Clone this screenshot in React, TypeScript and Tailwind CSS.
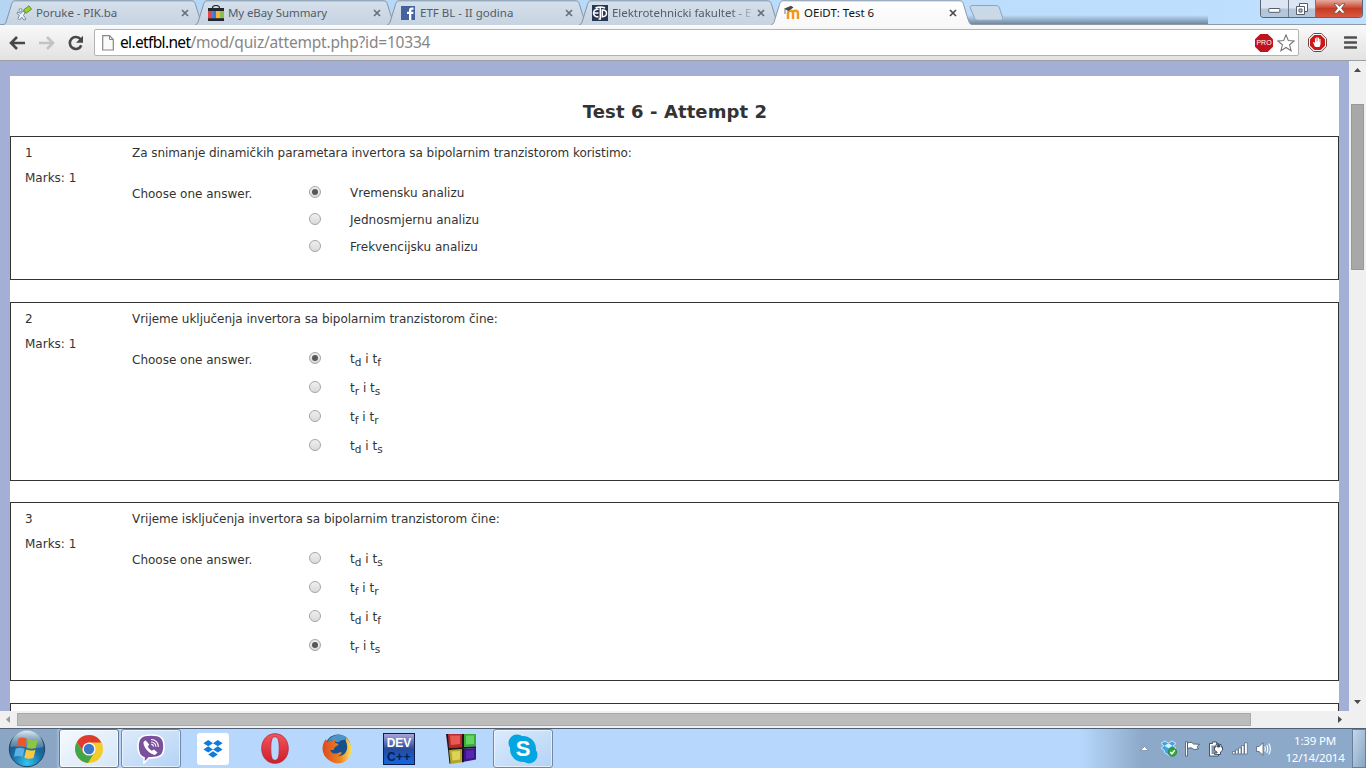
import React from "react";

type Choice = { parts: [string, string?][]; checked?: boolean };
type QuestionData = { no: string; text: string; choices: Choice[]; box: string; tall: boolean };

const t = (a: string, b: string, checked = false): Choice => ({
  parts: [["t", a], [" i t", b]],
  checked,
});

const questions: QuestionData[] = [
  {
    no: "1",
    text: "Za snimanje dinamičkih parametara invertora sa bipolarnim tranzistorom koristimo:",
    box: "h-[144px] mb-[22px]",
    tall: false,
    choices: [
      { parts: [["Vremensku analizu"]], checked: true },
      { parts: [["Jednosmjernu analizu"]] },
      { parts: [["Frekvencijsku analizu"]] },
    ],
  },
  {
    no: "2",
    text: "Vrijeme uključenja invertora sa bipolarnim tranzistorom čine:",
    box: "h-[179px] mb-[21px]",
    tall: true,
    choices: [t("d", "f", true), t("r", "s"), t("f", "r"), t("d", "s")],
  },
  {
    no: "3",
    text: "Vrijeme isključenja invertora sa bipolarnim tranzistorom čine:",
    box: "h-[179px] mb-[22px]",
    tall: true,
    choices: [t("d", "s"), t("f", "r"), t("d", "f"), t("r", "s", true)],
  },
];

function Radio({ checked }: { checked?: boolean }) {
  return (
    <svg className="mb-px shrink-0" width="12" height="12" viewBox="0 0 12 12">
      <defs>
        <linearGradient id="radio" x1="0" y1="0" x2="0" y2="1">
          <stop offset="0" stopColor="#f0f0f0" />
          <stop offset="1" stopColor="#d9d9d9" />
        </linearGradient>
      </defs>
      <circle cx="6" cy="6" r="5.500" fill="url(#radio)" stroke="#a6a6a6" />
      {checked && <circle cx="6" cy="6" r="3" fill="#575757" />}
    </svg>
  );
}

function Question({ q }: { q: QuestionData }) {
  return (
    <section className={`flex shrink-0 border border-[#333] pl-[14px] pt-[8px] ${q.box}`}>
      <div className="w-[107px] shrink-0 leading-4">
        <div>{q.no}</div>
        <div className="mt-[9px] tracking-normal">Marks: 1</div>
      </div>
      <div>
        <div className={`leading-4 ${q.tall ? "tracking-[-0.03px]" : ""}`}>{q.text}</div>
        <div className="mt-[17px] flex">
          <div className="mt-[8px] w-[177px] leading-4 tracking-normal">Choose one answer.</div>
          <div>
            {q.choices.map((c, i) => (
              <div key={i} className={`flex items-center ${q.tall ? "h-[29px]" : "h-[27px]"} ${i === 0 && !q.tall ? "mt-px" : ""}`}>
                <Radio checked={c.checked} />
                <div className="ml-[29px] whitespace-pre leading-4 tracking-[0.02px]">
                  {c.parts.map(([s, sub], j) => (
                    <React.Fragment key={j}>
                      {s}
                      {sub && <span className="relative top-[3px] text-[10.5px]">{sub}</span>}
                    </React.Fragment>
                  ))}
                </div>
              </div>
            ))}
          </div>
        </div>
      </div>
    </section>
  );
}

const PikIcon = () => (
  <svg width="16" height="16" viewBox="0 0 16 16">
    <path d="M1.500 7 5 8.500 7 6l2 1.500-1.500 3L10 14l-2 1-2.200-2.800L3.500 15 2 13.500l1.500-3.200L1 8.500z" fill="#eef4fa" stroke="#6d8093" strokeWidth=".9" />
    <path d="M7.500 5 13 .8l2.600 3.400L10 8.300z" fill="#9bcf2e" stroke="#5f8a2b" strokeWidth=".9" />
    <circle cx="4.500" cy="5" r="1.500" fill="#e8f0f7" stroke="#6d8093" strokeWidth=".8" />
  </svg>
);
const EbayIcon = () => (
  <svg width="16" height="16" viewBox="0 0 16 16">
    <path d="M4.500 4.500V3.200a3.500 2.700 0 0 1 7 0v1.300" fill="none" stroke="#24262e" strokeWidth="1.200" />
    <rect y="3" width="16" height="3" fill="#24262e" />
    <rect y="6" width="4.200" height="7.500" fill="#e5444b" />
    <rect x="4.200" y="6" width="3.900" height="7.500" fill="#3b78d8" />
    <rect x="8.100" y="6" width="3.900" height="7.500" fill="#f3b73b" />
    <rect x="12" y="6" width="4" height="7.500" fill="#8fc045" />
    <rect y="13.200" width="16" height="2.800" fill="#24262e" />
  </svg>
);
const FbIcon = () => (
  <svg width="16" height="16" viewBox="0 0 16 16">
    <rect x="1" y="1" width="14" height="14" fill="#46629e" />
    <path d="M9 15V9H7V6.800h2V5.300C9 3.300 10 2.400 12 2.400h1.500v2.300h-1.200c-.8 0-1 .3-1 1v1.100h2.200L13.200 9h-1.900v6z" fill="#fff" />
  </svg>
);
const EtfIcon = () => (
  <svg width="16" height="16" viewBox="0 0 16 16">
    <rect width="16" height="16" fill="#273452" />
    <g fill="none" stroke="#fff" strokeWidth="1.500">
      <path d="M6.500 4.300C3.500 4 1.500 5.800 1.500 8s2 4 5 3.800M2 8h4.500M3.500 3C6 1.500 10.500 1.500 13 3M8.300 2.500V14M6.500 14H9M10.300 5c2.800-.2 4.300 1.300 4.200 3.300-.1 2.200-1.700 3.500-4.200 3.400z" />
    </g>
  </svg>
);
const MoodleIcon = () => (
  <svg width="16" height="16" viewBox="0 0 16 16">
    <path d="M4 14V8.200C4 5.200 8.800 5 9 8v6M9 14V8c.2-3 5-3 5 .3V14" fill="none" stroke="#ee9a22" strokeWidth="2.500" />
    <path d="M0 3.800 7 .8l2.500 1.800L4.500 6z" fill="#494949" />
    <path d="M1 4v5" stroke="#6b6b6b" strokeWidth=".9" />
  </svg>
);

const tabs = [
  { title: "Poruke - PIK.ba", icon: <PikIcon />, cls: "tracking-[-0.1px]" },
  { title: "My eBay Summary", icon: <EbayIcon />, cls: "tracking-[-0.1px]" },
  { title: "ETF BL - II godina", icon: <FbIcon />, cls: "" },
  { title: "Elektrotehnicki fakultet - E", icon: <EtfIcon />, cls: "tracking-[-0.04px]" },
  { title: "OEiDT: Test 6", icon: <MoodleIcon />, cls: "" },
];

function Tab({ i }: { i: number }) {
  const active = i === 4;
  const tab = tabs[i];
  return (
    <div className={`relative flex h-[25px] w-[201px] shrink-0 items-start ${i ? "-ml-[9px]" : ""}`}>
      <svg className="absolute left-0 top-0" width="201" height="25" viewBox="0 0 201 25">
        <defs>
          <linearGradient id={`tab${i}`} x1="0" y1="0" x2="0" y2="1">
            <stop offset="0" stopColor={active ? "#ffffff" : "#d5e0eb"} />
            <stop offset="1" stopColor={active ? "#f8f8f8" : "#c6d3e0"} />
          </linearGradient>
        </defs>
        <path
          d="M0 25C3 24 3 22 4 19L8.500 4.500C9.500 1.500 10 .8 13 .8H188C191 .8 191.500 1.500 192.500 4.500L197 19C198 22 198.500 24 201 25"
          fill={`url(#tab${i})`}
          stroke={active ? "#8a98a8" : "#8494a5"}
          strokeWidth="1"
        />
      </svg>
      <div className="relative ml-[13px] mt-[5px] h-4 w-4 shrink-0">{tab.icon}</div>
      <div
        className={`relative ml-[4px] mt-[4px] w-[140px] overflow-hidden whitespace-nowrap font-['Noto_Sans',sans-serif] text-[11.5px] leading-[18px] ${
          active ? "text-[#111]" : "text-[#535c68]"
        } ${i === 3 ? "[mask-image:linear-gradient(to_right,#000_85%,#0003)]" : ""} ${tab.cls}`}
      >
        {tab.title}
      </div>
      <svg className="relative ml-[5px] mt-[9px] shrink-0" width="8" height="8" viewBox="0 0 8 8">
        <path d="M1 1l6 6M7 1 1 7" stroke={active ? "#4a4a4a" : "#66707b"} strokeWidth="1.700" />
      </svg>
    </div>
  );
}

function WindowButtons() {
  return (
    <div className="absolute right-[3px] top-0 flex h-[18px] w-[103px] overflow-hidden rounded-b-[4px] border border-t-0 border-[#5b6674]">
      <div className="flex w-[28px] items-center justify-center border-r border-[#6d7a8a] bg-linear-to-b from-[#dbe6f2] from-45% to-[#b3c6da] to-55%">
        <svg className="mt-[3px]" width="13" height="7"><rect x=".8" y="1.500" width="11" height="3.800" rx=".5" fill="#fff" stroke="#555d68" /></svg>
      </div>
      <div className="flex w-[27px] items-center justify-center border-r border-[#6d7a8a] bg-linear-to-b from-[#dbe6f2] from-45% to-[#b3c6da] to-55%">
        <svg width="12" height="12" viewBox="0 0 12 12" fill="#fff" stroke="#555d68"><path d="M3.500.5h8v8h-8z" /><path d="M.5 3.500h8v8h-8z" /><path d="M3 6h3v3H3z" fill="#b9c9da" /></svg>
      </div>
      <div className="flex flex-1 items-center justify-center bg-linear-to-b from-[#e5ab9f] from-0% via-[#c53c25] via-50% to-[#d9583d]">
        <svg width="13" height="11" viewBox="0 0 13 11"><path d="M1 .8h3.200l2.300 2.600L8.800.8H12L8.500 5.300l3.800 4.900H8.900L6.500 7.400l-2.400 2.800H.7l3.800-4.900z" fill="#fff" stroke="#5a4a50" strokeWidth=".8" /></svg>
      </div>
    </div>
  );
}

function Toolbar() {
  return (
    <div className="flex h-[37px] shrink-0 items-center border-b border-[#9d9fa3] border-t border-t-[#8e9aa6] bg-linear-to-b from-[#f9f9f9] to-[#e2e2e2]">
      <svg className="ml-[9px]" width="17" height="16" viewBox="0 0 17 16"><path d="M8 2 2 8l6 6M2.500 8H16" fill="none" stroke="#474747" strokeWidth="2.600" /></svg>
      <svg className="ml-[13px]" width="16" height="16" viewBox="0 0 16 16"><path d="M8 2l6 6-6 6M13.500 8H0" fill="none" stroke="#c3c3c3" strokeWidth="2.600" /></svg>
      <svg className="ml-[12px]" width="18" height="16" viewBox="0 0 18 16"><path d="M13.600 4.300A6 6 0 1 0 14.300 10.400" fill="none" stroke="#474747" strokeWidth="2.600" /><path d="M16 .8v7H9z" fill="#474747" /></svg>
      <div className="ml-[9px] flex h-[27px] w-[1205px] items-center rounded-[2px] border border-[#b3b3b3] bg-white">
        <svg className="ml-[7px]" width="12" height="16" viewBox="0 0 12 16"><path d="M.7.7H7.500L11.300 4.500V15H.7z" fill="#fafafa" stroke="#888" strokeWidth="1.200" /><path d="M7.500.7v3.800h3.800" fill="none" stroke="#888" /></svg>
        <div className="ml-[6px] flex-1 -translate-y-px whitespace-nowrap font-['Noto_Sans',sans-serif] text-[15.5px] leading-6 tracking-[-0.19px] text-[#868686]">
          <span className="text-black tracking-[-0.65px]">el.etfbl.net</span>/mod/quiz/attempt.php?id=10334
        </div>
        <span className="relative flex h-[18px] w-[18px] items-center justify-center">
          <svg className="absolute left-0 top-0" width="18" height="18" viewBox="0 0 18 18"><path d="M5.300 0h7.400L18 5.300v7.400L12.700 18H5.300L0 12.700V5.300z" fill="#bf1320" /></svg>
          <span className="relative font-['Liberation_Sans',sans-serif] text-[7px] leading-none text-white">PRO</span>
        </span>
        <svg className="ml-[4px] mr-[3px]" width="18" height="18" viewBox="0 0 18 18"><path d="M9 .9l2.300 5.600 5.900.4-4.600 3.900 1.500 6L9 13.500l-5.100 3.300 1.500-6L.8 6.900l5.900-.4z" fill="#fff" stroke="#777" strokeWidth="1.100" /></svg>
      </div>
      <svg className="ml-[9px]" width="19" height="19" viewBox="0 0 19 19">
        <path d="M5.700.5h7.600l5.200 5.200v7.600l-5.200 5.200H5.700L.5 13.300V5.700z" fill="#fff" stroke="#6f4747" />
        <path d="M6.300 2h6.400L17 6.300v6.400L12.700 17H6.300L2 12.700V6.300z" fill="#cf1717" />
        <path d="M6.500 13 5 9.200l1-.3 1 1.200V5.200h1.100v3.300h.3V4.200h1.200v4.300h.4V4.800h1.100v4h.3V6h1.100v5.500L11.500 14h-4z" fill="#fff" />
      </svg>
      <svg className="ml-[17px]" width="13" height="13" viewBox="0 0 13 13"><path d="M1 1.500h11M1 6.500h11M1 11.500h11" stroke="#505050" strokeWidth="2.600" strokeLinecap="round" /></svg>
    </div>
  );
}

const ChromeLogo = () => (
  <svg width="30" height="30" viewBox="0 0 30 30">
    <circle cx="15" cy="15" r="14" fill="#f4cb2c" />
    <path d="M15 8.500h12.400A14 14 0 0 0 2.900 8l6.500 10z" fill="#dd3b2f" />
    <path d="M2.900 8A14 14 0 0 0 14 29l6.400-10.500-10.600.500z" fill="#45a546" />
    <circle cx="15" cy="15" r="6.600" fill="#f5f7f8" />
    <circle cx="15" cy="15" r="5.200" fill="#3d78c6" />
  </svg>
);
const ViberLogo = () => (
  <svg width="28" height="30" viewBox="0 0 28 30">
    <path d="M14 1C4 1 1 4 1 12.500 1 19 3 22.500 7 23.700V29l5-5.200c11 .5 15-2.300 15-11.300C27 4 24 1 14 1z" fill="#7b519d" stroke="#fff" strokeWidth="1.600" />
    <path d="M8.500 6.200 6.500 8c-.5 5 5.500 12 11.500 13l2.500-2.400-3.500-3.200-2.200 1.400c-2-1-3.300-2.500-4-4.200l1.500-2.200z" fill="#fff" />
    <path d="M14 5.500c4.500 0 7.500 3 7.300 7.500M14 8c3 0 5 2 4.800 4.800M14.200 10.300c1.500 0 2.200 1 2.200 2.300" fill="none" stroke="#fff" strokeWidth="1.100" />
  </svg>
);
const DropboxLogo = () => (
  <svg width="32" height="32" viewBox="0 0 32 32">
    <rect width="32" height="32" rx="3" fill="#fff" />
    <path d="M11.200 7 16 10.200 11.200 13.300 6.400 10.200zM20.800 7l4.800 3.200-4.800 3.100L16 10.200zM11.200 13.300 16 16.400l-4.800 3.200-4.800-3.200zM20.800 13.300l4.800 3.100-4.800 3.200-4.800-3.200zM16 18.200l4.800 3.200L16 24.800l-4.800-3.400z" fill="#107bdb" />
  </svg>
);
const OperaLogo = () => (
  <svg width="28" height="31" viewBox="0 0 28 31">
    <defs><linearGradient id="op" x1="0" y1="0" x2="0" y2="1"><stop offset="0" stopColor="#f4545a" /><stop offset="1" stopColor="#cc1f2c" /></linearGradient></defs>
    <path fillRule="evenodd" d="M14 .7C22 .7 27.300 7 27.300 15.500S22 30.300 14 30.300.7 24 .7 15.500 6 .7 14 .7zm0 3C10.800 3.700 9.800 8 9.800 15.500S10.800 27.300 14 27.300s4.200-4.300 4.200-11.800S17.200 3.700 14 3.700z" fill="url(#op)" stroke="#b52a38" strokeWidth=".8" />
  </svg>
);
const FirefoxLogo = () => (
  <svg width="30" height="30" viewBox="0 0 30 30">
    <defs><linearGradient id="ff" x1="0" y1="0" x2="1" y2="0"><stop offset="0" stopColor="#dc4a1e" /><stop offset=".6" stopColor="#ed8222" /><stop offset="1" stopColor="#fbe25a" /></linearGradient></defs>
    <circle cx="16" cy="13" r="12.600" fill="#17508c" />
    <path d="M6 7C9 1 19-2 25 4c-2 3-6 1-8 4-3 1-6-3-11-1z" fill="#4a94c8" />
    <path d="M24.500 4C30 9 31 18 27 23.500 23 29.500 16 30.500 11 28.500 4 26 0 20 .6 13 1 9.500 2.300 7 4 5l1.200 2.800c1.600-1.200 3.200-1.300 5-.8C11.500 5.300 12.500 4.700 14 4.500c-1.300 1.500-1.500 3-.8 4.300 1.500.6 2.600.8 3.300 1.400-.8 1.800-2.500 1.900-3.500 2.800-.9 1-.6 2.400-1.500 3-1.500.3-2.200-.2-3 .2.3 2.500 3.800 4 6.500 3.200 2-.6 3-1.800 4.800-.6-.8 1.900-2.400 3-4.400 3.500 6 .3 10.600-4.500 9.700-10.500-.4-2.500-.9-4.300-1.600-5.800z" fill="url(#ff)" />
  </svg>
);
const DevLogo = () => (
  <div className="flex h-[32px] w-[32px] flex-col items-center justify-between border border-[#101c4c] bg-linear-to-b from-[#a7a5d8] via-[#244a9c] via-50% to-[#0b68e0] font-['Liberation_Sans',sans-serif] font-bold">
    <span className="mt-[1px] h-[14px] text-[12px] leading-[16px] text-white">DEV</span>
    <span className="h-[14px] text-[12px] leading-[14px] tracking-[0.4px] text-[#071d55]">C++</span>
  </div>
);
const BlocksLogo = () => (
  <svg width="30" height="32" viewBox="0 0 30 32">
    <path d="M0 1h3l2 14 0 15-1.500 1L2 17z" fill="#20141b" />
    <path d="M2 1H16v13.500L3 15z" fill="#b92a2c" /><path d="M4 2.500h10v8.500L5 12z" fill="#e95953" />
    <path d="M18 1h12v12l-12 1z" fill="#39ad38" /><path d="M20 2.500h8v8.500l-8 .5z" fill="#63d660" />
    <path d="M3 17l13-.8v13L4.500 31z" fill="#afa62b" /><path d="M5.500 18.500l8.500-.5v8.500l-7.500 1z" fill="#ddd456" />
    <path d="M18 16l12-1v11.500l-12 2.300z" fill="#3c1689" /><path d="M20 17.500l8-.6V25l-8 1z" fill="#5427ac" />
    <path d="M16 1h2v28l-2 .5zM3 15l27-1.800v1.800L3 17z" fill="#20141b" />
  </svg>
);
const SkypeLogo = () => (
  <div className="relative flex h-[30px] w-[30px] items-center justify-center">
    <svg className="absolute left-0 top-0" width="30" height="30" viewBox="0 0 30 30">
      <circle cx="15" cy="15" r="13" fill="#05a5e1" /><circle cx="9" cy="9" r="8.500" fill="#05a5e1" /><circle cx="21" cy="21" r="8.500" fill="#05a5e1" />
    </svg>
    <span className="relative font-['Liberation_Sans',sans-serif] text-[22px] font-bold leading-none text-white">S</span>
  </div>
);
const StartOrb = () => (
  <svg width="38" height="38" viewBox="0 0 38 38">
    <defs>
      <radialGradient id="orb" cx=".5" cy=".9" r=".85"><stop offset="0" stopColor="#31c6f0" /><stop offset=".5" stopColor="#1a6fa6" /><stop offset="1" stopColor="#20496f" /></radialGradient>
      <linearGradient id="gloss" x1="0" y1="0" x2="0" y2="1"><stop offset="0" stopColor="#e0ecf4" /><stop offset="1" stopColor="#6f98b4" stopOpacity=".55" /></linearGradient>
    </defs>
    <circle cx="19" cy="19" r="17.700" fill="url(#orb)" stroke="#1b4666" />
    <path d="M2.500 17A16.500 16.500 0 0 1 35.500 17C27 20 15 15 2.500 17z" fill="url(#gloss)" />
    <path d="M10.500 8.500c3-1.700 5.500-1 8.300.3L17 17c-3-1.300-5.500-1.500-8.700-.2z" fill="#e8582a" />
    <path d="M20.500 9.500c3.300 1.300 6 1.500 9.300.2L27.800 18c-3.300 1.200-6 1-9.200-.3z" fill="#90c53f" />
    <path d="M7.800 18.500c3.300-1.300 5.800-1 8.800.3L14.700 27c-3-1.300-5.500-1.500-8.800-.2z" fill="#5bb1e6" />
    <path d="M18.200 19.500c3.300 1.300 6 1.500 9.300.2L25.500 28c-3.300 1.200-6 1-9.200-.3z" fill="#fbc93d" />
  </svg>
);

function TaskButton({ children, state }: { children: React.ReactNode; state?: "active" | "open" }) {
  const skin =
    state === "active"
      ? "border border-[#63768c] bg-linear-to-br from-[#f5f9fd] to-[#d5e6f8] shadow-[inset_0_0_0_1px_#ffffffb0]"
      : state === "open"
        ? "border border-[#7189a5] bg-linear-to-br from-[#dcebfb] to-[#b4d3f5] shadow-[inset_0_0_0_1px_#ffffff90]"
        : "";
  return <div className={`flex h-[39px] w-[60px] shrink-0 items-center justify-center rounded-[3px] ${skin}`}>{children}</div>;
}

function Taskbar() {
  return (
    <div className="flex h-[40px] shrink-0 border-t border-[#4f6074] bg-[linear-gradient(to_right,#8ba5c4_0,#8ba5c4_56px,#b7d8fc_62px,#b7d8fc_1080px,#8da9c9_1142px,#8da9c9_100%)]">
      <div className="flex w-[59px] shrink-0 items-center pl-[8px]"><StartOrb /></div>
      <div className="flex flex-1 gap-[2px]">
        <TaskButton state="active"><ChromeLogo /></TaskButton>
        <TaskButton state="open"><ViberLogo /></TaskButton>
        <TaskButton><DropboxLogo /></TaskButton>
        <TaskButton><OperaLogo /></TaskButton>
        <TaskButton><FirefoxLogo /></TaskButton>
        <TaskButton><DevLogo /></TaskButton>
        <TaskButton><BlocksLogo /></TaskButton>
        <TaskButton state="open"><SkypeLogo /></TaskButton>
      </div>
      <div className="flex w-[226px] shrink-0 items-center">
        <svg width="9" height="5" viewBox="0 0 9 5"><path d="M4.500 .5 8.500 4.500H.5z" fill="#fff" stroke="#5b6c80" strokeWidth=".5" /></svg>
        <svg className="ml-[11px]" width="18" height="17" viewBox="0 0 18 17">
          <path d="M5 1 8.500 3.200 12 1l4 2.500-3 2.300 3 2.300-4 2.500v2.200L8.500 15 4.500 12.500v-2L1 8.200l3-2.400-3-2.300z" fill="#3fa3e6" stroke="#e6f5ff" strokeWidth=".8" />
          <path d="M8.500 3.300 12.500 5.800 8.500 8.300 4.500 5.800z" fill="#d9f0fc" />
          <circle cx="12.500" cy="12" r="4.200" fill="#32a835" stroke="#1b7d28" strokeWidth=".7" /><path d="M10.300 12l1.600 1.800 2.800-3.500" fill="none" stroke="#fff" strokeWidth="1.400" />
        </svg>
        <svg className="ml-[6px]" width="17" height="16" viewBox="0 0 17 16"><path d="M1.500.8h2V15h-2z" fill="#fff" stroke="#35475c" strokeWidth=".7" /><path d="M3.500 2c3-1.500 4.500-.5 6 1l6 .3-2.200 2.200 1 2.500c-4 .8-5 .3-6-.7-1.500-.8-3-.5-4.800.4z" fill="#fff" stroke="#35475c" strokeWidth=".8" /></svg>
        <svg className="ml-[7px]" width="16" height="16" viewBox="0 0 16 16">
          <path d="M1.500 2.500h3V1h4v1.500h2V15h-9z" fill="#fff" stroke="#25384b" strokeWidth=".8" /><path d="M3.500 4.500h5V13h-5z" fill="#8497aa" />
          <path d="M6.500 6H8V3.500h1.500V6h2V3.500H13V6h1.500v3.200L12.500 11v2.500H6.500V12H9v-1L6.500 9.200z" fill="#fff" stroke="#25384b" strokeWidth=".8" />
        </svg>
        <svg className="ml-[8px]" width="16" height="13" viewBox="0 0 16 13" fill="#fff" stroke="#40536a" strokeWidth=".6"><path d="M.5 9.500H3V12H.5zM3.500 8H6v4H3.500zM6.500 6H9v6H6.500zM9.500 3.500H12V12H9.500zM12.500.8H15.300V12H12.500z" /></svg>
        <svg className="ml-[8px]" width="16" height="14" viewBox="0 0 16 14"><path d="M.6 4.500H3L7 .8v12.400L3 9.500H.6z" fill="#fff" stroke="#40536a" strokeWidth=".7" /><path d="M8.700 4.500q1.300 2.500 0 5M10.700 3q2.200 4 0 8M12.700 1.500q3.300 5.500 0 11" fill="none" stroke="#fff" strokeWidth="1.100" /></svg>
        <div className="ml-[10px] flex w-[66px] flex-col items-center whitespace-nowrap font-['Noto_Sans',sans-serif] text-[11.5px] leading-[17px] tracking-[-0.2px] text-white">
          <span>1:39 PM</span>
          <span>12/14/2014</span>
        </div>
        <div className="ml-auto h-[39px] w-[14px] shrink-0 border border-[#65809c] bg-linear-to-br from-[#c5d7e9] to-[#89a6c4]" />
      </div>
    </div>
  );
}

export default function App() {
  return (
    <div className="flex h-[768px] w-[1366px] flex-col overflow-hidden bg-white">
      <header className="relative flex h-[24px] shrink-0 bg-linear-to-r from-[#b5d5f5] to-[#c0e0ff] pl-[3px]">
        <div className="absolute bottom-0 left-[968px] h-[9px] w-[240px] bg-linear-to-b from-[#b9d9fb00] to-[#71889f]" />
        {tabs.map((_, i) => (
          <Tab key={i} i={i} />
        ))}
        <svg className="relative -ml-[3px] mt-[5px]" width="34" height="16" viewBox="0 0 34 16"><path d="M3 .5h24c2 0 3 .8 3.500 2.500l3 9.500c.4 2-.3 2.700-2 2.700H9c-2 0-3-1-3.600-2.700L1.300 3C.9 1.400 1.400.5 3 .5z" fill="#c9d9e8" stroke="#8fa4b9" /></svg>
        <WindowButtons />
      </header>
      <Toolbar />
      <div className="flex h-[650px] shrink-0">
        <main className="h-[650px] w-[1349px] shrink-0 overflow-hidden bg-[#a3afd5] px-[10px] pt-[15px]">
          <div className="flex h-[700px] flex-col bg-white font-['DejaVu_Sans',Verdana,sans-serif] text-[12px] tracking-[-0.06px] text-[#333]">
            <h1 className="mt-[24px] h-[36px] shrink-0 pl-px text-center text-[18px] font-bold leading-[24px] tracking-[0.1px]">Test 6 - Attempt 2</h1>
            {questions.map((q) => (
              <Question key={q.no} q={q} />
            ))}
            <section className="h-[100px] shrink-0 border border-[#333]" />
          </div>
        </main>
        <aside className="flex w-[17px] flex-col items-center bg-[#f0f0f0]">
          <svg className="mt-[7px]" width="7" height="4"><path d="M3.500 0 7 4H0z" fill="#4a4a4a" /></svg>
          <div className="mt-[32px] h-[166px] w-[13px] border border-[#999] bg-[#a8a8a8]" />
          <svg className="mb-[7px] mt-auto" width="7" height="4"><path d="M0 0h7L3.500 4z" fill="#4a4a4a" /></svg>
        </aside>
      </div>
      <div className="flex h-[17px] shrink-0 items-center bg-[#f0f0f0]">
        <svg className="ml-[6px]" width="4" height="7"><path d="M4 0v7L0 3.500z" fill="#9a9a9a" /></svg>
        <div className="ml-[7px] h-[13px] w-[1234px] border border-[#a8a8a8] bg-[#bcbcbc]" />
        <svg className="ml-[87px]" width="4" height="7"><path d="M0 0v7l4-3.500z" fill="#4a4a4a" /></svg>
      </div>
      <Taskbar />
    </div>
  );
}
